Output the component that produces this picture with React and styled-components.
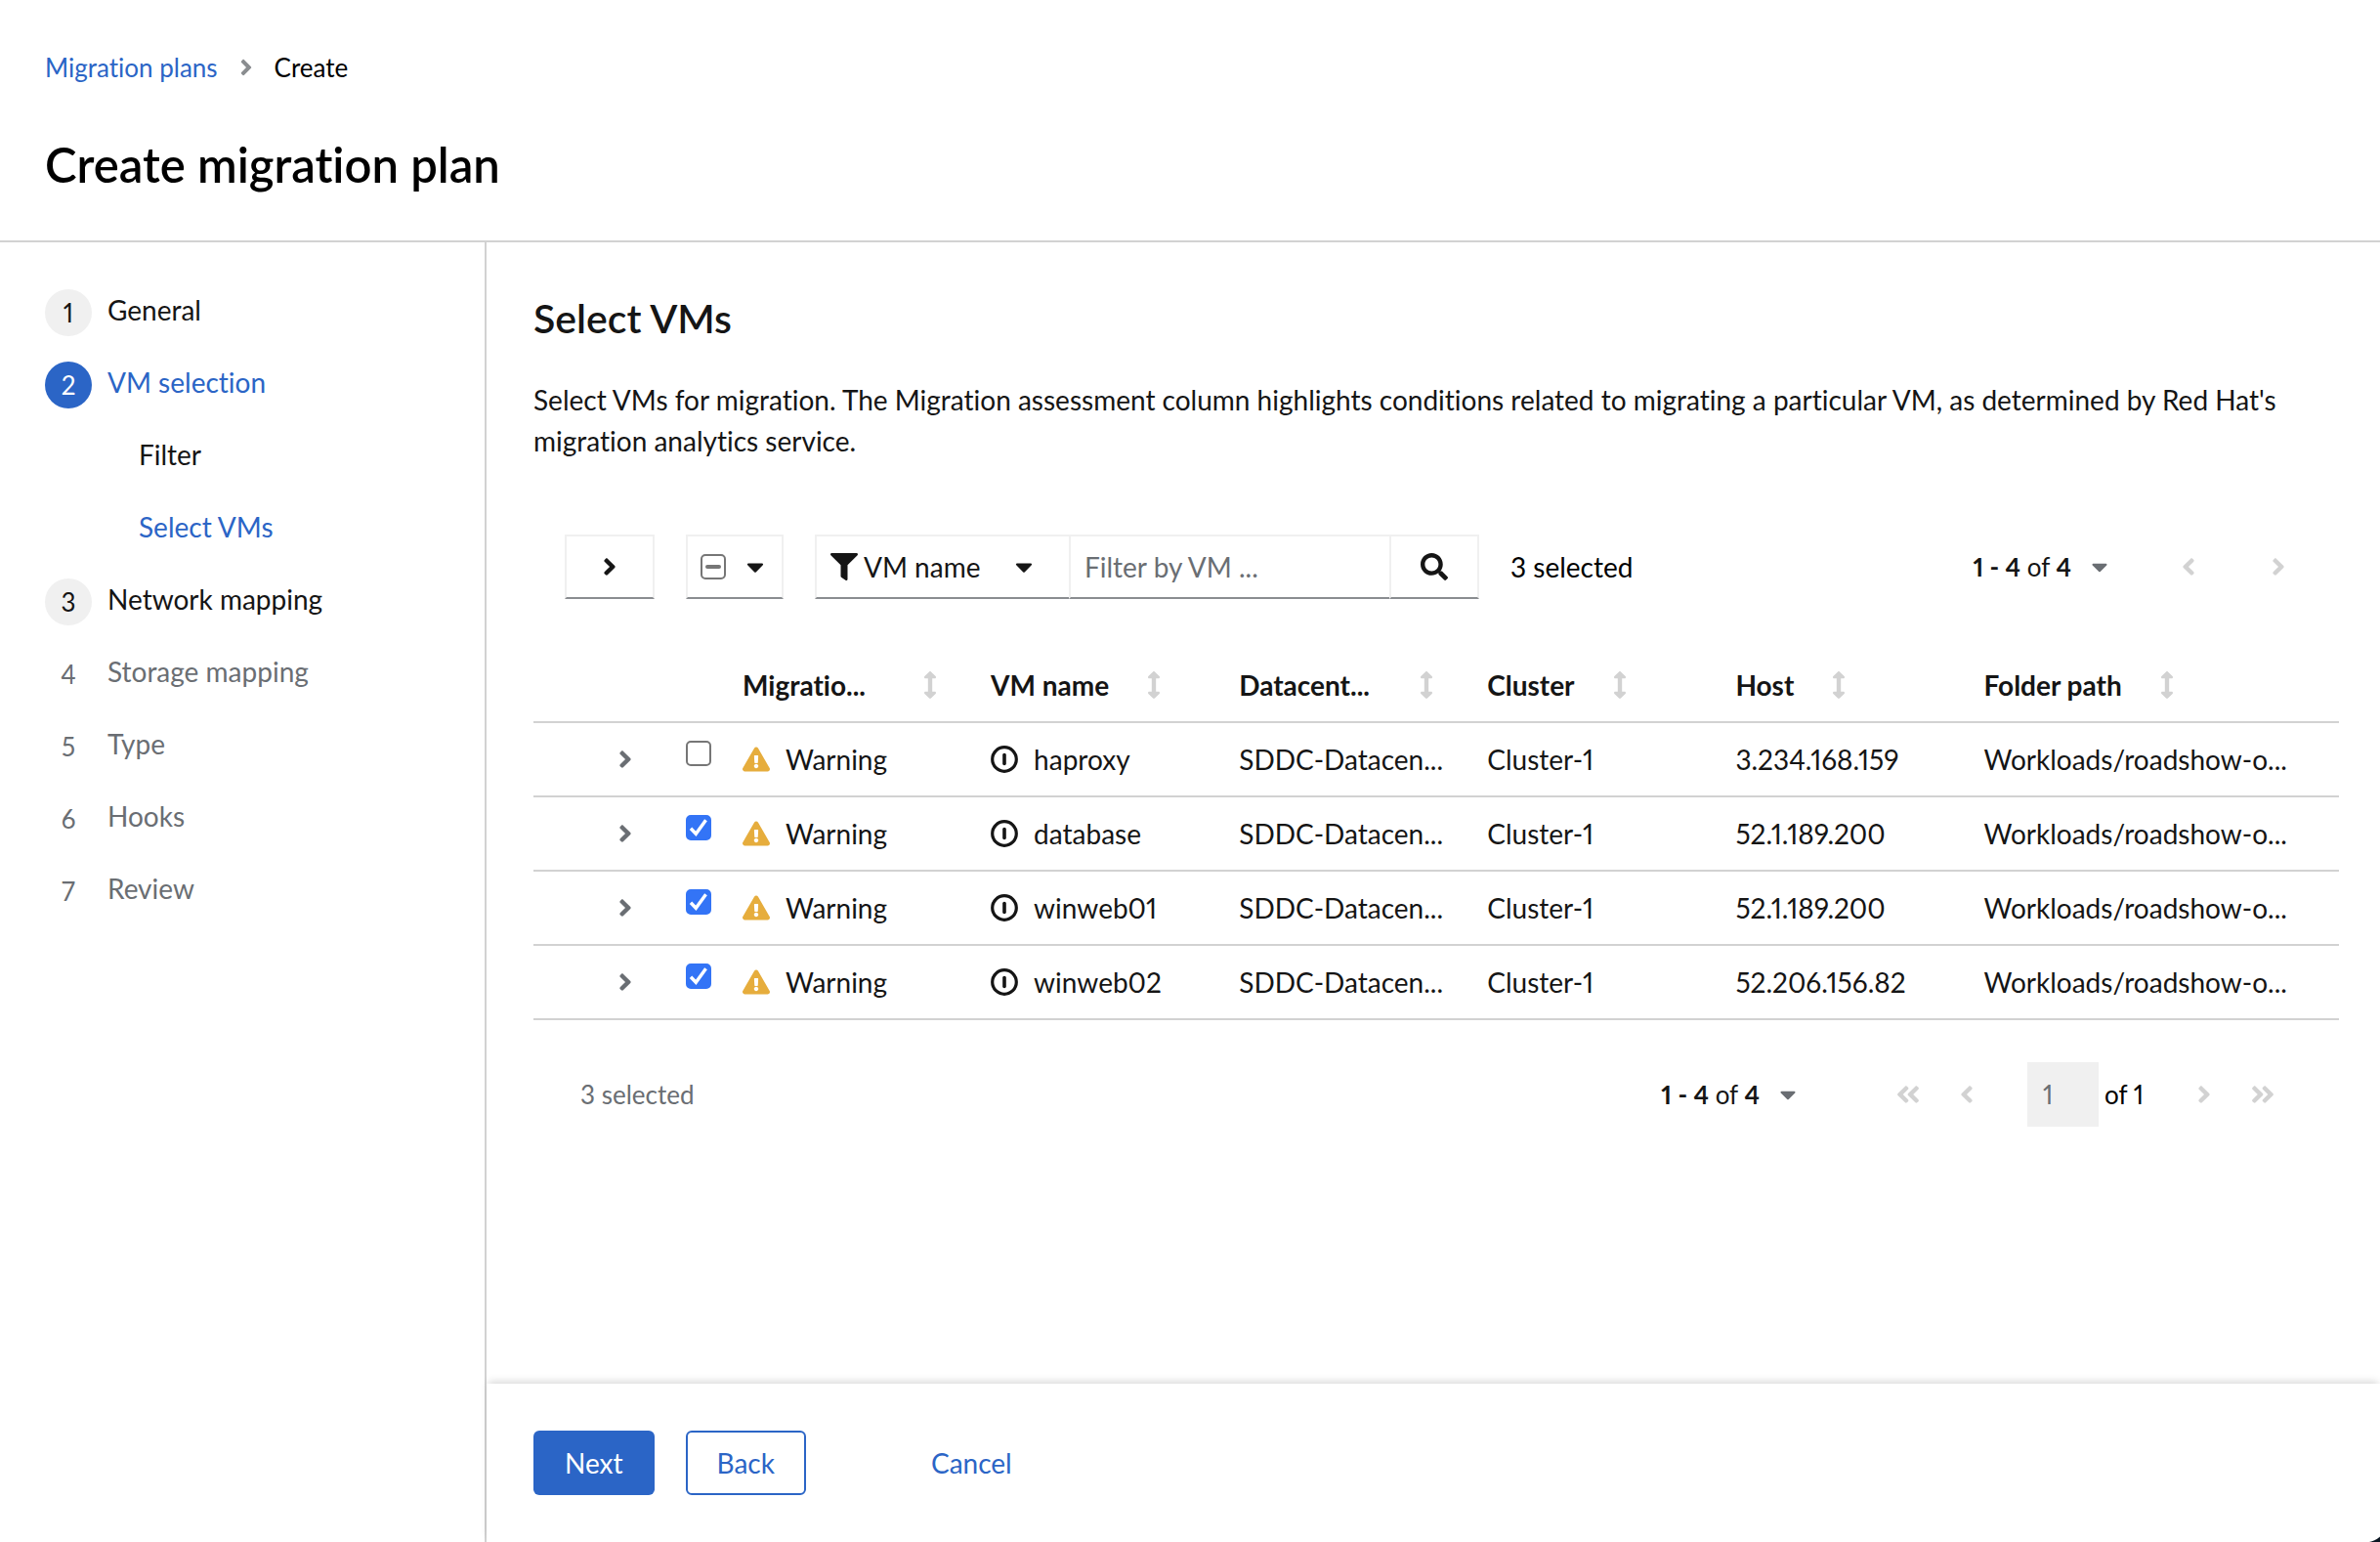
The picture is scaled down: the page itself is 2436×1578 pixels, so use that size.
import React, { useEffect, useRef, useState } from "react";
import styled, { createGlobalStyle } from "styled-components";
import {
  FaAngleDoubleLeft,
  FaAngleDoubleRight,
  FaAngleLeft,
  FaAngleRight,
  FaArrowsAltV,
  FaCaretDown,
  FaExclamationTriangle,
  FaFilter,
  FaSearch,
} from "react-icons/fa";

const color = {
  text: "#151515",
  muted: "#6a6e73",
  link: "#2b65c6",
  line: "#d2d2d2",
  pale: "#f0f0f0",
  edge: "#8a8d90",
  check: "#3374f6",
  warning: "#e6ad3d",
};

const GlobalStyle = createGlobalStyle`
  *, *::before, *::after { box-sizing: border-box; }
  body {
    margin: 0;
    background: #fff;
    color: ${color.text};
    font-family: Lato, "Open Sans", sans-serif;
    font-size: 28px;
    font-variant-ligatures: none;
    font-variant-numeric: proportional-nums;
    line-height: 42px;
  }
  button, input, select {
    margin: 0;
    color: inherit;
    font: inherit;
    font-variant-ligatures: inherit;
    font-variant-numeric: inherit;
  }
  button { cursor: pointer; }
  svg { display: block; flex: none; }
`;

const Page = styled.div`
  display: flex;
  flex-direction: column;
  min-height: 100vh;
`;

const Header = styled.header`
  padding: 48px 46px;
  border-bottom: 2px solid ${color.line};
  color: #000;
`;

const Crumbs = styled.ol`
  display: flex;
  align-items: center;
  gap: 16px;
  margin: 0 0 48px;
  padding: 0;
  list-style: none;
  font-size: 26px;
`;

const Crumb = styled.li`
  display: flex;
  align-items: center;
  gap: 16px;
`;

const Link = styled.a`
  color: ${color.link};
  text-decoration: none;
`;

const PageTitle = styled.h1`
  margin: 0;
  font-size: 49px;
  font-weight: 600;
  line-height: 60px;
`;

const Wizard = styled.div`
  display: flex;
  flex: 1;
`;

const Sidebar = styled.nav`
  flex: none;
  width: 498px;
  padding: 48px 46px;
  border-right: 2px solid ${color.line};
`;

const Steps = styled.ol`
  display: grid;
  gap: 26px;
  margin: 0;
  padding: 0;
  list-style: none;
`;

const StepButton = styled.button`
  display: flex;
  gap: 16px;
  height: 48px;
  padding: 0 0 0 ${(p) => (p.$nested ? "96px" : "0")};
  border: 0;
  background: none;
  text-align: left;
  color: ${(p) => (p.$current ? color.link : p.$pending ? color.muted : color.text)};
`;

const StepNumber = styled.span`
  width: 48px;
  border-radius: 50%;
  font-size: 26px;
  line-height: 48px;
  text-align: center;
  background: ${(p) => (p.$current ? color.link : p.$pending ? "none" : color.pale)};
  color: ${(p) => (p.$current ? "#fff" : p.$pending ? color.muted : color.text)};
`;

const Main = styled.main`
  display: flex;
  flex: 1;
  flex-direction: column;
  min-width: 0;
`;

const Body = styled.section`
  flex: 1;
  padding: 48px 42px 48px 48px;
`;

const SectionTitle = styled.h2`
  margin: 0 0 32px;
  font-size: 41px;
  font-weight: 600;
  line-height: 60px;
`;

const Intro = styled.p`
  margin: 0 0 75px;
`;

const Toolbar = styled.div`
  display: flex;
  align-items: center;
  gap: 32px;
  padding: 0 32px;
  margin-bottom: 50px;
`;

const Spacer = styled.div`
  flex: 1;
`;

const frame = `
  height: 66px;
  border: 2px solid ${color.pale};
  border-bottom-color: ${color.edge};
  background: #fff;
`;

const ExpandAll = styled.button`
  ${frame}
  display: grid;
  place-items: center;
  width: 92px;
  padding: 0;
`;

const BulkSelect = styled.div`
  ${frame}
  display: flex;
  align-items: center;
  justify-content: center;
  gap: 16px;
  width: 100px;
`;

const BareButton = styled.button`
  display: flex;
  align-items: center;
  padding: 0;
  border: 0;
  background: none;
`;

const FilterGroup = styled.div`
  display: flex;
`;

const SelectBox = styled.div`
  ${frame}
  display: grid;
  grid-template-columns: 28px 1fr 28px;
  align-items: center;
  width: 260px;
  padding: 0 32px 0 14px;
  border-right: 0;

  > svg { grid-row: 1; pointer-events: none; }
  > svg:first-child { grid-column: 1; }
  > svg:last-child { grid-column: 3; }
`;

const Select = styled.select`
  grid-row: 1;
  grid-column: 1 / -1;
  height: 62px;
  padding: 0 28px 0 34px;
  border: 0;
  background: none;
  appearance: none;
`;

const FilterInput = styled.input`
  ${frame}
  width: 328px;
  padding: 0 14px;
  border-right: 0;
  border-radius: 0;

  &::placeholder { color: ${color.muted}; opacity: 1; }
`;

const SearchButton = styled.button`
  ${frame}
  display: grid;
  place-items: center;
  width: 92px;
  padding: 0;
`;

const Count = styled.span`
  color: ${(p) => (p.$muted ? color.muted : "#000")};
  font-size: ${(p) => (p.$muted ? "26px" : "28px")};
`;

const RangeButton = styled.button`
  display: flex;
  align-items: center;
  gap: 16px;
  padding: 0 16px 0 0;
  border: 0;
  background: none;
  font-size: 26px;

  b { font-weight: 700; }
  svg { color: ${color.muted}; }
`;

const PageButton = styled.button`
  display: grid;
  place-items: center;
  width: 60px;
  height: 66px;
  padding: 0;
  border: 0;
  background: none;
  color: ${color.line};
`;

const Pagination = styled.div`
  display: flex;
  align-items: center;
  padding: 43px 48px 0;
`;

const PageButtons = styled.div`
  display: flex;
  margin-left: ${(p) => (p.$first ? "64px" : "0")};
`;

const PageField = styled.label`
  display: flex;
  align-items: center;
  gap: 6px;
  margin: 0 32px;
  color: #000;
  font-size: 26px;
`;

const PageInput = styled.input`
  width: 73px;
  height: 66px;
  padding: 0 16px;
  border: 0;
  background: ${color.pale};
  color: ${color.muted};
`;

const Table = styled.table`
  width: 100%;
  table-layout: fixed;
  border-collapse: collapse;
`;

const Col = styled.col`
  width: ${(p) => p.$width};
`;

const Row = styled.tr`
  height: 76px;
  border-bottom: 2px solid ${color.line};
`;

const HeadCell = styled.th`
  padding: 0 16px;
  text-align: left;
`;

const SortButton = styled.button`
  display: flex;
  align-items: center;
  gap: 32px;
  width: 100%;
  padding: 0 16px 0 0;
  border: 0;
  background: none;
  text-align: left;
  font-weight: 700;

  span { flex: ${(p) => (p.$fill ? "1" : "none")}; }
  svg { color: ${color.line}; }
`;

const Cell = styled.td`
  padding: ${(p) => (p.$top ? "18px 16px 0" : "0 16px")};
  vertical-align: ${(p) => (p.$top ? "top" : "middle")};
  white-space: nowrap;
`;

const RowToggle = styled(BareButton)`
  margin-left: 64px;
  color: ${color.muted};
`;

const IconText = styled.span`
  display: flex;
  align-items: center;
  gap: 16px;
`;

const CheckWrap = styled.span`
  display: grid;
  width: 26px;
  height: 26px;

  > * { grid-area: 1 / 1; }
  svg { pointer-events: none; }
`;

const Check = styled.input`
  appearance: none;
  width: 26px;
  height: 26px;
  border: 2px solid #767676;
  border-radius: 5px;
  background: #fff;

  &:checked { border-color: ${color.check}; background: ${color.check}; }
`;

const Footer = styled.footer`
  display: flex;
  gap: 32px;
  padding: 48px;
  background: #fff;
  box-shadow: 0 -4px 8px -2px rgba(3, 3, 3, 0.16);
`;

const Action = styled.button`
  height: 66px;
  padding: 0 ${(p) => (p.$kind === "secondary" ? "30px" : "32px")};
  border: ${(p) => (p.$kind === "secondary" ? `2px solid ${color.link}` : "0")};
  border-radius: 6px;
  margin-left: ${(p) => (p.$kind === "link" ? "64px" : "0")};
  background: ${(p) => (p.$kind === "primary" ? color.link : "none")};
  color: ${(p) => (p.$kind === "primary" ? "#fff" : color.link)};
`;

const Corner = styled.div`
  position: fixed;
  right: 0;
  bottom: 0;
  width: 16px;
  height: 6px;
  background: radial-gradient(circle at 0 -18px, transparent 24px, #0b1622 25px);
`;

function Checkbox({ mixed, checked, onChange, label }) {
  const ref = useRef(null);
  useEffect(() => {
    ref.current.indeterminate = Boolean(mixed);
  }, [mixed]);
  return (
    <CheckWrap>
      <Check ref={ref} type="checkbox" checked={checked} onChange={onChange} aria-label={label} />
      <svg width="26" height="26" viewBox="0 0 26 26" fill="none" aria-hidden="true">
        {checked && <path d="M5 13.8 10.3 19.3 20.5 5.2" stroke="#fff" strokeWidth="3.4" />}
        {mixed && <path d="M7 13H19" stroke="#767676" strokeWidth="4" strokeLinecap="round" />}
      </svg>
    </CheckWrap>
  );
}

function PowerOffIcon() {
  return (
    <svg width="28" height="28" viewBox="0 0 28 28" fill="none" stroke="currentColor" aria-hidden="true">
      <circle cx="14" cy="14" r="12.3" strokeWidth="3.2" />
      <path d="M14 9.5V18.5" strokeWidth="3.6" strokeLinecap="round" />
    </svg>
  );
}

function Range() {
  return (
    <RangeButton type="button">
      <span>
        <b>1 - 4</b> of <b>4</b>
      </span>
      <FaCaretDown size={26} />
    </RangeButton>
  );
}

const steps = [
  { number: 1, label: "General" },
  { number: 2, label: "VM selection", current: true },
  { label: "Filter" },
  { label: "Select VMs", current: true },
  { number: 3, label: "Network mapping" },
  { number: 4, label: "Storage mapping", pending: true },
  { number: 5, label: "Type", pending: true },
  { number: 6, label: "Hooks", pending: true },
  { number: 7, label: "Review", pending: true },
];

const columns = [
  { label: "Migratio...", fill: true },
  { label: "VM name" },
  { label: "Datacent...", fill: true },
  { label: "Cluster" },
  { label: "Host" },
  { label: "Folder path" },
];

const vms = [
  { name: "haproxy", host: "3.234.168.159" },
  { name: "database", host: "52.1.189.200" },
  { name: "winweb01", host: "52.1.189.200" },
  { name: "winweb02", host: "52.206.156.82" },
];

export default function App() {
  const [selected, setSelected] = useState(["database", "winweb01", "winweb02"]);
  const toggle = (name) =>
    setSelected((list) => (list.includes(name) ? list.filter((n) => n !== name) : [...list, name]));
  const all = selected.length === vms.length;
  const toggleAll = () => setSelected(all ? [] : vms.map((vm) => vm.name));

  return (
    <Page>
      <GlobalStyle />
      <Header>
        <nav>
          <Crumbs>
            <Crumb>
              <Link href="#plans">Migration plans</Link>
              <FaAngleRight size={26} color={color.edge} />
            </Crumb>
            <Crumb>Create</Crumb>
          </Crumbs>
        </nav>
        <PageTitle>Create migration plan</PageTitle>
      </Header>
      <Wizard>
        <Sidebar>
          <Steps>
            {steps.map((step) => (
              <li key={step.label}>
                <StepButton type="button" $nested={!step.number} $current={step.current} $pending={step.pending}>
                  {step.number && (
                    <StepNumber $current={step.current} $pending={step.pending}>
                      {step.number}
                    </StepNumber>
                  )}
                  {step.label}
                </StepButton>
              </li>
            ))}
          </Steps>
        </Sidebar>
        <Main>
          <Body>
            <SectionTitle>Select VMs</SectionTitle>
            <Intro>
              Select VMs for migration. The Migration assessment column highlights conditions related to migrating a
              particular VM, as determined by Red Hat's migration analytics service.
            </Intro>
            <Toolbar>
              <ExpandAll type="button" aria-label="Expand all">
                <FaAngleRight size={28} />
              </ExpandAll>
              <BulkSelect>
                <Checkbox
                  label="Select all"
                  checked={all}
                  mixed={selected.length > 0 && !all}
                  onChange={toggleAll}
                />
                <BareButton type="button" aria-label="Selection options">
                  <FaCaretDown size={28} />
                </BareButton>
              </BulkSelect>
              <FilterGroup>
                <SelectBox>
                  <FaFilter size={28} />
                  <Select aria-label="Filter field">
                    <option>VM name</option>
                  </Select>
                  <FaCaretDown size={28} />
                </SelectBox>
                <FilterInput type="search" placeholder="Filter by VM ..." aria-label="Filter by VM" />
                <SearchButton type="button" aria-label="Search">
                  <FaSearch size={28} />
                </SearchButton>
              </FilterGroup>
              <Count>{selected.length} selected</Count>
              <Spacer />
              <Range />
              <PageButton type="button" disabled aria-label="Previous page">
                <FaAngleLeft size={28} />
              </PageButton>
              <PageButton type="button" disabled aria-label="Next page">
                <FaAngleRight size={28} />
              </PageButton>
            </Toolbar>
            <Table>
              <colgroup>
                <Col $width="140px" />
                <Col $width="58px" />
                {columns.map((column, i) => (
                  <Col key={column.label} $width={i < 5 ? "13.75%" : "auto"} />
                ))}
              </colgroup>
              <thead>
                <Row>
                  <td />
                  <td />
                  {columns.map((column) => (
                    <HeadCell key={column.label} scope="col">
                      <SortButton type="button" $fill={column.fill}>
                        <span>{column.label}</span>
                        <FaArrowsAltV size={28} />
                      </SortButton>
                    </HeadCell>
                  ))}
                </Row>
              </thead>
              <tbody>
                {vms.map((vm) => (
                  <Row key={vm.name}>
                    <Cell>
                      <RowToggle type="button" aria-label={`Details of ${vm.name}`}>
                        <FaAngleRight size={28} />
                      </RowToggle>
                    </Cell>
                    <Cell $top>
                      <Checkbox
                        label={`Select ${vm.name}`}
                        checked={selected.includes(vm.name)}
                        onChange={() => toggle(vm.name)}
                      />
                    </Cell>
                    <Cell>
                      <IconText>
                        <FaExclamationTriangle size={28} color={color.warning} />
                        Warning
                      </IconText>
                    </Cell>
                    <Cell>
                      <IconText>
                        <PowerOffIcon />
                        {vm.name}
                      </IconText>
                    </Cell>
                    <Cell>SDDC-Datacen...</Cell>
                    <Cell>Cluster-1</Cell>
                    <Cell>{vm.host}</Cell>
                    <Cell>Workloads/roadshow-o...</Cell>
                  </Row>
                ))}
              </tbody>
            </Table>
            <Pagination>
              <Count $muted>{selected.length} selected</Count>
              <Spacer />
              <Range />
              <PageButtons $first>
                <PageButton type="button" disabled aria-label="First page">
                  <FaAngleDoubleLeft size={28} />
                </PageButton>
                <PageButton type="button" disabled aria-label="Previous page">
                  <FaAngleLeft size={28} />
                </PageButton>
              </PageButtons>
              <PageField>
                <PageInput type="text" defaultValue="1" disabled aria-label="Current page" />
                of 1
              </PageField>
              <PageButtons>
                <PageButton type="button" disabled aria-label="Next page">
                  <FaAngleRight size={28} />
                </PageButton>
                <PageButton type="button" disabled aria-label="Last page">
                  <FaAngleDoubleRight size={28} />
                </PageButton>
              </PageButtons>
            </Pagination>
          </Body>
          <Footer>
            <Action type="button" $kind="primary">Next</Action>
            <Action type="button" $kind="secondary">Back</Action>
            <Action type="button" $kind="link">Cancel</Action>
          </Footer>
        </Main>
      </Wizard>
      <Corner />
    </Page>
  );
}
